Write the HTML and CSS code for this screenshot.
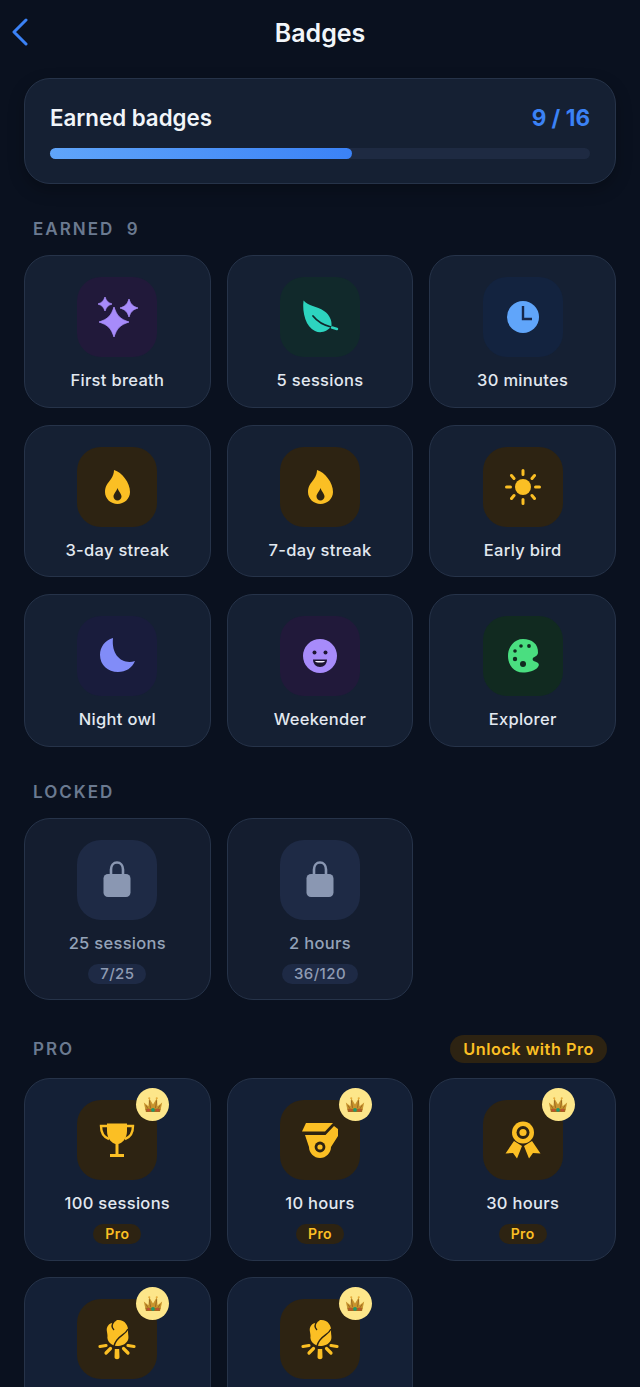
FILE: index.html
```html
<!DOCTYPE html>
<html lang="en">
<head>
    <meta charset="UTF-8">
    <meta name="viewport" content="width=device-width, initial-scale=1.0">
    <title>Badges</title>
    <link rel="stylesheet" href="styles.css">
</head>
<body>
    <!-- Shared icons -->
    <svg class="sprites" width="0" height="0" aria-hidden="true">
        <symbol id="flame" viewBox="0 0 48 48">
            <path fill="#fbbf24" d="M21 7C29 9 37 20 37 29C37 36 31 41 24.5 41C18 41 12 36 12 29C12 23 15 20 18 16C20 13 21 10 21 7Z"/>
            <path fill="#2d2312" d="M24.5 25C26 29 28.5 31 28.5 33.5C28.5 35.8 26.7 37.5 24.5 37.5C22.3 37.5 20.5 35.8 20.5 33.5C20.5 31 23 29 24.5 25Z"/>
        </symbol>
        <symbol id="lock" viewBox="0 0 48 48">
            <path fill="none" stroke="#8a97b2" stroke-width="2.6" d="M18 19V13.5C18 9.5 20.5 6.5 24 6.5C27.5 6.5 30 9.5 30 13.5V19"/>
            <rect fill="#8a97b2" x="10.5" y="18" width="27" height="23" rx="4.5"/>
        </symbol>
        <symbol id="campfire" viewBox="0 0 48 48">
            <path fill="#fbbf24" d="M24 5C31 4 36 10 35 17C35 20 36 22 35 25C33 29.5 28 31 24 31C18 30.5 13.5 26 14.5 21C14.5 16 12 14 16 9.5C18 7.5 20 9 24 5Z"/>
            <path fill="none" stroke="#2d2312" stroke-width="1.4" d="M35 14C32 21 24 20 21 31M21 6.5C18 10 19 13 21 15"/>
            <path fill="#fbbf24" d="M21.8 34H26.2L26.5 42C26.5 45 21.5 45 21.5 42Z"/>
            <path fill="none" stroke="#fbbf24" stroke-linecap="round" stroke-width="3.2" d="M17.5 33.5L13 38M30.5 33.5L35 38M7 31.5L13 30.5M41 31.5L35 30.5"/>
        </symbol>
        <symbol id="crown" viewBox="0 0 24 20">
            <path fill="#c8942e" d="M3 17L1 7.5L6.5 12L7.5 2.5L12 10L16.5 2.5L17.5 12L23 7.5L21 17Z"/>
            <path fill="none" stroke="#8a5a1c" stroke-width="0.9" d="M7.5 5L9 14M16.5 5L15 14M3.5 11L6 15M20.5 11L18 15"/>
            <path fill="#a8681f" d="M3 15H21L20.5 19H3.5Z"/>
            <circle fill="#e5ab3a" cx="7.5" cy="2.5" r="1.3"/>
            <circle fill="#e5ab3a" cx="16.5" cy="2.5" r="1.3"/>
            <circle fill="#1f9a6b" cx="12" cy="16.5" r="2.2"/>
            <circle fill="#c7483c" cx="6.5" cy="16.8" r="1.3"/>
            <circle fill="#c7483c" cx="17.5" cy="16.8" r="1.3"/>
        </symbol>
    </svg>

    <div class="screen">
        <header class="topbar">
            <a class="back" href="#" aria-label="Back">
                <svg width="18" height="28" viewBox="0 0 18 28"><path fill="none" stroke="#3b82f6" stroke-width="3" stroke-linecap="round" stroke-linejoin="round" d="M15 2L3 14L15 26"/></svg>
            </a>
            <h1>Badges</h1>
        </header>

        <!-- Summary -->
        <section class="summary">
            <div class="summary-row">
                <span class="summary-title">Earned badges</span>
                <span class="summary-count">9 / 16</span>
            </div>
            <div class="progress"><div class="progress-fill" style="width: 55.9%"></div></div>
        </section>

        <!-- Earned -->
        <div class="section-head"><h2 class="section-label">EARNED&nbsp; 9</h2></div>
        <div class="grid grid-earned">
            <div class="card">
                <div class="icon icon-violet">
                    <svg width="48" height="48" viewBox="0 0 48 48"><path fill="#a78bfa" stroke="#a78bfa" stroke-width="0.8" stroke-linejoin="round" d="M21 14C24 23 27 26 36 29C27 32 24 35 21 44C18 35 15 32 6 29C15 26 18 23 21 14ZM12 4C13.4 8 15 9.6 19 11C15 12.4 13.4 14 12 18C10.6 14 9 12.4 5 11C9 9.6 10.6 8 12 4ZM36 6C37.8 11.4 39.6 13.2 45 15C39.6 16.8 37.8 18.6 36 24C34.2 18.6 32.4 16.8 27 15C32.4 13.2 34.2 11.4 36 6Z"/></svg>
                </div>
                <div class="name">First breath</div>
            </div>
            <div class="card">
                <div class="icon icon-teal">
                    <svg width="48" height="48" viewBox="0 0 48 48">
                        <path fill="#2dd4bf" d="M7.5 7.5C12 13 21 13 28 18C34 22 36 28 35.5 33C32 38 25 41 19 38C10 34 6 20 7.5 7.5Z"/>
                        <path fill="none" stroke="#11292b" stroke-width="1.8" stroke-linecap="round" d="M17 23C21 28 27 32 35 34"/>
                        <path fill="none" stroke="#2dd4bf" stroke-width="2.4" stroke-linecap="round" d="M36 34.5L41 36"/>
                    </svg>
                </div>
                <div class="name">5 sessions</div>
            </div>
            <div class="card">
                <div class="icon icon-blue">
                    <svg width="48" height="48" viewBox="0 0 48 48">
                        <circle fill="#60a5fa" cx="24" cy="24" r="16"/>
                        <path fill="none" stroke="#16264a" stroke-width="2.4" d="M24 13V26H33"/>
                    </svg>
                </div>
                <div class="name">30 minutes</div>
            </div>
            <div class="card">
                <div class="icon icon-gold"><svg width="48" height="48"><use href="#flame"/></svg></div>
                <div class="name">3-day streak</div>
            </div>
            <div class="card">
                <div class="icon icon-gold"><svg width="48" height="48"><use href="#flame"/></svg></div>
                <div class="name">7-day streak</div>
            </div>
            <div class="card">
                <div class="icon icon-gold">
                    <svg width="48" height="48" viewBox="0 0 48 48">
                        <circle fill="#fbbf24" cx="24" cy="24" r="8"/>
                        <path stroke="#fbbf24" stroke-width="3" stroke-linecap="round" d="M24 7.5V11.5M24 36.5V40.5M7.5 24H11.5M36.5 24H40.5M12.5 12.5L15 15.5M35.5 12.5L33 15.5M12.5 35.5L15 32.5M35.5 35.5L33 32.5"/>
                    </svg>
                </div>
                <div class="name">Early bird</div>
            </div>
            <div class="card">
                <div class="icon icon-indigo">
                    <svg width="48" height="48" viewBox="0 0 48 48"><path fill="#818cf8" d="M20 6C12 8 7 15 7 23C7 33 15 40 25 40C33 40 39 36 42 29C30 33 18 24 20 6Z"/></svg>
                </div>
                <div class="name">Night owl</div>
            </div>
            <div class="card">
                <div class="icon icon-violet">
                    <svg width="48" height="48" viewBox="0 0 48 48">
                        <circle fill="#a78bfa" cx="24" cy="24" r="17"/>
                        <circle fill="#1d1633" cx="18.5" cy="20.5" r="2"/>
                        <circle fill="#1d1633" cx="29.5" cy="20.5" r="2"/>
                        <path fill="#1d1633" d="M17 27.5H31C31 32 28 35 24 35C20 35 17 32 17 27.5Z"/>
                        <path fill="#f3eeff" d="M19 29H29C28.5 30 27 30.5 24 30.5C21 30.5 19.5 30 19 29Z"/>
                    </svg>
                </div>
                <div class="name">Weekender</div>
            </div>
            <div class="card">
                <div class="icon icon-green">
                    <svg width="48" height="48" viewBox="0 0 48 48">
                        <path fill="#4ade80" d="M24 7C33 7 39.5 12 39 21C38.5 24 35 25 34 26C33 27.5 34 29 36 29.5C39.5 30.5 41 32.5 39 35C36 39 29 40.5 24 40.5C15 40.5 9 33 9 24C9 15 15 7 24 7Z"/>
                        <g fill="#112a20">
                            <circle cx="16" cy="19" r="1.8"/>
                            <circle cx="22" cy="14" r="1.8"/>
                            <circle cx="30" cy="14" r="1.9"/>
                            <circle cx="16" cy="27" r="2.2"/>
                            <circle cx="24" cy="32" r="3"/>
                        </g>
                    </svg>
                </div>
                <div class="name">Explorer</div>
            </div>
        </div>

        <!-- Locked -->
        <div class="section-head section-locked"><h2 class="section-label">LOCKED</h2></div>
        <div class="grid">
            <div class="card card-locked">
                <div class="icon icon-slate"><svg width="48" height="48"><use href="#lock"/></svg></div>
                <div class="name">25 sessions</div>
                <span class="chip chip-progress">7/25</span>
            </div>
            <div class="card card-locked">
                <div class="icon icon-slate"><svg width="48" height="48"><use href="#lock"/></svg></div>
                <div class="name">2 hours</div>
                <span class="chip chip-progress">36/120</span>
            </div>
        </div>

        <!-- Pro -->
        <div class="section-head section-pro">
            <h2 class="section-label">PRO</h2>
            <button class="unlock" type="button">Unlock with Pro</button>
        </div>
        <div class="grid">
            <div class="card card-pro">
                <div class="icon icon-gold">
                    <svg width="48" height="48" viewBox="0 0 48 48">
                        <path fill="#fbbf24" d="M14 7.5H34V15C34 23 29 27 25.5 28V38H31V41H17V38H22.5V28C19 27 14 23 14 15Z"/>
                        <path fill="none" stroke="#fbbf24" stroke-width="2.4" d="M14 10H8C8 17 10 21 16 23M34 10H40C40 17 38 21 32 23"/>
                    </svg>
                    <span class="crown"><svg width="20" height="17"><use href="#crown"/></svg></span>
                </div>
                <div class="name">100 sessions</div>
                <span class="chip chip-pro">Pro</span>
            </div>
            <div class="card card-pro">
                <div class="icon icon-gold">
                    <svg width="48" height="48" viewBox="0 0 48 48">
                        <path fill="#fbbf24" d="M10 7H37L29 15.5H6Z"/>
                        <path fill="#fbbf24" d="M9 19H29.5L38 10L42 13V20L35 31C35 37 30 42 24 42C18 42 13 37 13 31Z"/>
                        <circle fill="#2d2312" cx="24" cy="31" r="5.4"/>
                        <circle fill="#fbbf24" cx="24" cy="31" r="2.6"/>
                    </svg>
                    <span class="crown"><svg width="20" height="17"><use href="#crown"/></svg></span>
                </div>
                <div class="name">10 hours</div>
                <span class="chip chip-pro">Pro</span>
            </div>
            <div class="card card-pro">
                <div class="icon icon-gold">
                    <svg width="48" height="48" viewBox="0 0 48 48">
                        <path fill="#fbbf24" d="M15 25L6.5 37.5L14 37L18 42.5L23 30ZM33 25L41.5 37.5L34 37L30 42.5L25 30Z"/>
                        <circle fill="#fbbf24" cx="24" cy="16.5" r="11"/>
                        <circle fill="#2d2312" cx="24" cy="16.5" r="6.5"/>
                        <circle fill="#fbbf24" cx="24" cy="16.5" r="3.6"/>
                    </svg>
                    <span class="crown"><svg width="20" height="17"><use href="#crown"/></svg></span>
                </div>
                <div class="name">30 hours</div>
                <span class="chip chip-pro">Pro</span>
            </div>
            <div class="card card-pro">
                <div class="icon icon-gold">
                    <svg width="48" height="48"><use href="#campfire"/></svg>
                    <span class="crown"><svg width="20" height="17"><use href="#crown"/></svg></span>
                </div>
            </div>
            <div class="card card-pro">
                <div class="icon icon-gold">
                    <svg width="48" height="48"><use href="#campfire"/></svg>
                    <span class="crown"><svg width="20" height="17"><use href="#crown"/></svg></span>
                </div>
            </div>
        </div>
    </div>
</body>
</html>
```

FILE: styles.css
```css
* {
    box-sizing: border-box;
}

html,
body {
    height: 100%;
    margin: 0;
    overflow: hidden;
}

body {
    font-family: Inter, "Noto Sans", sans-serif;
    background-color: #0a111f;
    color: #e2e8f0;
}

.sprites {
    position: absolute;
}

.screen {
    padding: 0 24px;
}

/* Top bar */
.topbar {
    position: relative;
    height: 78px;
    padding-top: 14px;
    text-align: center;
}

.topbar h1 {
    margin: 0;
    font-size: 25px;
    line-height: 38px;
    font-weight: 600;
    color: #f1f5f9;
}

.back {
    position: absolute;
    left: -13px;
    top: 18px;
}

/* Summary card */
.summary {
    height: 106px;
    padding: 23px 25px 0;
    background-color: #152033;
    border: 1px solid #263349;
    border-radius: 26px;
    box-shadow: 0 6px 16px rgba(0, 0, 0, 0.25);
}

.summary-row {
    display: flex;
    justify-content: space-between;
    align-items: center;
    height: 30px;
}

.summary-title {
    font-size: 22.3px;
    font-weight: 600;
    color: #f1f5f9;
}

.summary-count {
    font-size: 22.5px;
    font-weight: 700;
    color: #3b82f6;
}

.progress {
    height: 11px;
    margin-top: 16px;
    background-color: #1e2a42;
    border-radius: 6px;
}

.progress-fill {
    height: 100%;
    background: linear-gradient(90deg, #60a5fa, #3b82f6);
    border-radius: 6px;
}

/* Sections */
.section-head {
    display: flex;
    justify-content: space-between;
    align-items: center;
    height: 28px;
    margin: 31px 0 12px;
    padding: 0 9px;
}

.section-locked {
    margin-top: 31px;
    margin-bottom: 12px;
}

.section-pro {
    margin-top: 35px;
    margin-bottom: 15px;
}

.section-label {
    margin: 0;
    font-size: 17px;
    font-weight: 600;
    letter-spacing: 2px;
    color: #6b7a90;
}

.unlock {
    height: 28px;
    padding: 0 13px;
    border: none;
    border-radius: 14px;
    background-color: #2d2312;
    color: #fbbf24;
    font-family: inherit;
    font-size: 16.3px;
    font-weight: 600;
    letter-spacing: 0.5px;
}

.grid {
    display: grid;
    grid-template-columns: repeat(3, 1fr);
    gap: 16px;
}

.grid-earned {
    row-gap: 17px;
}

/* Badge cards */
.card {
    display: flex;
    flex-direction: column;
    align-items: center;
    height: 152.5px;
    padding-top: 21px;
    background-color: #152033;
    border: 1px solid #263349;
    border-radius: 26px;
}

.card-locked {
    height: 182px;
    background-color: #141d2f;
}

.card-pro {
    height: 183px;
    background-color: #142036;
}

.icon {
    position: relative;
    display: flex;
    justify-content: center;
    align-items: center;
    flex: none;
    width: 80px;
    height: 80px;
    border-radius: 24px;
}

.icon-violet { background-color: #21193a; }
.icon-teal { background-color: #11292b; }
.icon-blue { background-color: #13233f; }
.icon-gold { background-color: #2d2312; }
.icon-indigo { background-color: #191c3c; }
.icon-green { background-color: #112a20; }
.icon-slate { background-color: #1e2a45; }

.name {
    margin-top: 12px;
    font-size: 16.5px;
    line-height: 22px;
    font-weight: 500;
    letter-spacing: 0.3px;
    color: #e2e8f0;
}

.card-locked .name {
    color: #94a3b8;
}

.chip {
    margin-top: 10px;
    padding: 0 12px;
    height: 20px;
    border-radius: 10px;
    font-size: 15px;
    line-height: 20px;
    font-weight: 500;
    letter-spacing: 0.4px;
}

.chip-progress {
    background-color: #1e2a45;
    color: #8f9bb3;
}

.chip-pro {
    background-color: #2d2312;
    color: #fbbf24;
    font-size: 14px;
    font-weight: 600;
}

/* Crown badge over the icon corner */
.crown {
    position: absolute;
    top: -12px;
    right: -12px;
    display: flex;
    justify-content: center;
    align-items: center;
    width: 33px;
    height: 33px;
    border-radius: 50%;
    background-color: #fde68a;
}
```
